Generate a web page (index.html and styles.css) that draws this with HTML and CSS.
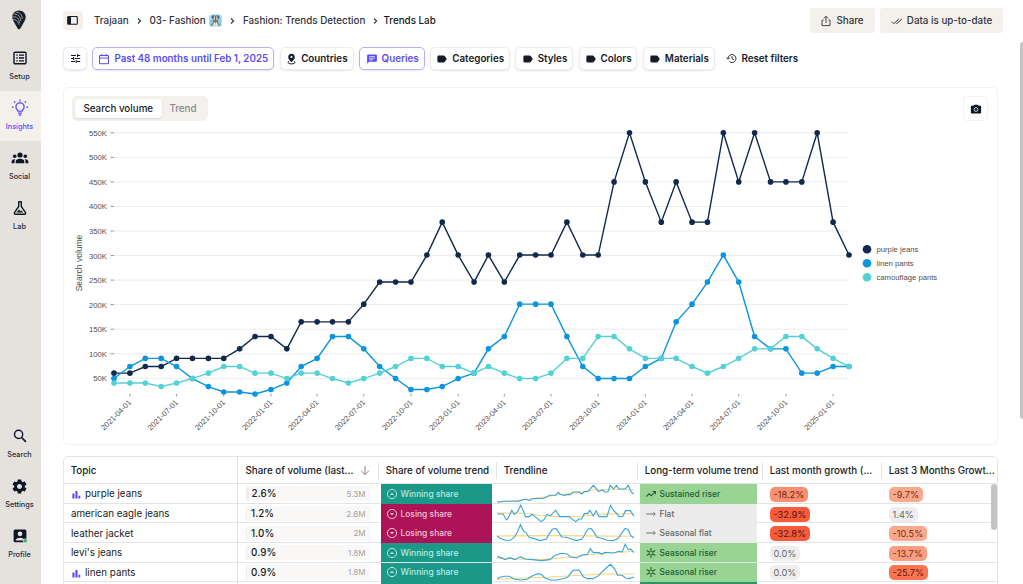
FILE: index.html
```html
<!DOCTYPE html>
<html lang="en">
<head>
<meta charset="UTF-8">
<meta name="viewport" content="width=device-width, initial-scale=1.0">
<title>Trends Lab</title>
<link rel="stylesheet" href="styles.css">
</head>
<body>
<!-- shared icons -->
<svg class="defs" width="0" height="0">
  <symbol id="tag" viewBox="0 0 12 12"><path d="M2.700 2.600h5c.5 0 .9.2 1.200.6L10.800 6 8.900 8.800c-.3.400-.7.600-1.200.600h-5C1.900 9.400 1.400 8.900 1.400 8.200V3.800c0-.7.500-1.200 1.300-1.200z" fill="currentColor"/></symbol>
  <symbol id="bars" viewBox="0 0 9 9"><path d="M.4 3.400h2.100v5.100H.4zM3.400.9h2.100v7.600H3.400zM6.400 5.800h1.900v2.700H6.400z" fill="currentColor"/></symbol>
  <symbol id="up" viewBox="0 0 12 12"><circle cx="6" cy="6" r="4.600" fill="none" stroke="currentColor" stroke-width="1"/><path d="M3.900 6.900L6 4.800l2.100 2.100z" fill="currentColor"/></symbol>
  <symbol id="down" viewBox="0 0 12 12"><circle cx="6" cy="6" r="4.600" fill="none" stroke="currentColor" stroke-width="1"/><path d="M3.900 5.100L6 7.200l2.100-2.100z" fill="currentColor"/></symbol>
  <symbol id="flat" viewBox="0 0 12 12"><path d="M1.300 6h9M8.300 4.200L10.200 6 8.300 7.800" fill="none" stroke="currentColor" stroke-width=".9"/></symbol>
  <symbol id="riser" viewBox="0 0 12 12"><path d="M1.300 8.600l2.800-2.800 2 2 4-4M7.600 3.500h2.800v2.800" fill="none" stroke="currentColor" stroke-width="1.100"/></symbol>
  <symbol id="season" viewBox="0 0 12 12"><circle cx="6" cy="6" r="2" fill="none" stroke="currentColor" stroke-width="1"/><path d="M6 1v2.500M6 8.500V11M1.700 3.500l2.200 1.300M8.100 7.200l2.200 1.300M1.700 8.500l2.200-1.300M8.100 4.800l2.200-1.300" stroke="currentColor" stroke-width="1.100"/></symbol>
</svg>

<div class="app">
  <nav class="sidebar">
    <div class="logo">
      <svg width="14" height="20" viewBox="0 0 14 20">
        <path d="M7 .5C3 .5.300 3.400.300 7.100c0 3.300 2 5.500 3.600 8.300.8 1.500 1.500 3 3.100 4.100 1.600-1.100 2.300-2.600 3.100-4.100 1.600-2.800 3.600-5 3.600-8.300C13.700 3.400 11 .5 7 .5z" fill="#1a202b"/>
        <path d="M.8 9.700c3.200-.4 5.300 1.300 6.100 5M.4 6.900c4.200-.6 7 1.600 7.200 6.300M1.500 4.200c4.400-.4 7.200 2.200 7.300 6.800M3.500 2c4.200.2 6.600 2.700 6.800 6.800" fill="none" stroke="#e5e2dd" stroke-width=".6"/>
      </svg>
    </div>
    <a class="nav-item">
      <svg width="16" height="16" viewBox="0 0 16 16"><rect x="2" y="2.200" width="12" height="11.600" rx="1" fill="none" stroke="currentColor" stroke-width="1.400"/><path d="M4.300 5.200h1.400M4.300 8h1.400M4.300 10.800h1.400M7 5.200h5M7 8h5M7 10.800h5" stroke="currentColor" stroke-width="1.300"/></svg>
      <span>Setup</span>
    </a>
    <a class="nav-item active">
      <svg width="18" height="18" viewBox="0 0 18 18"><path d="M6.900 12.200c0-1.200-2-2-2-4.300a4.100 4.100 0 0 1 8.200 0c0 2.300-2 3.100-2 4.300zM7 14.100h4M7.800 16h2.400M9 .6v1.900M3 2.300l1.200 1.200M15 2.300l-1.200 1.200M.8 8.200h1.900M15.300 8.200h1.900" fill="none" stroke="currentColor" stroke-width="1.300"/></svg>
      <span>Insights</span>
    </a>
    <a class="nav-item">
      <svg width="18" height="16" viewBox="0 0 18 16" fill="currentColor"><circle cx="9" cy="5" r="2.600"/><circle cx="3.700" cy="6.200" r="1.800"/><circle cx="14.300" cy="6.200" r="1.800"/><path d="M4.700 13.200v-1.600C4.700 9.800 6.700 8.800 9 8.800s4.300 1 4.300 2.800v1.600zM.6 13.200v-1.500c0-1.800 1.500-2.700 3.700-2.500-.6.700-.8 1.500-.8 2.400v1.600zM17.400 13.200v-1.500c0-1.800-1.500-2.700-3.700-2.500.6.700.8 1.500.8 2.400v1.600z"/></svg>
      <span>Social</span>
    </a>
    <a class="nav-item">
      <svg width="16" height="16" viewBox="0 0 16 16"><path d="M6.300 1.700h3.400M6.700 1.700v4.800L2.500 12.700c-.4.700 0 1.500.8 1.500h9.400c.8 0 1.200-.8.8-1.500L9.300 6.500V1.700" fill="none" stroke="currentColor" stroke-width="1.400"/><path d="M4.500 12.600l2.600-3 1.400 1.700.8-.7 2 2z" fill="currentColor"/></svg>
      <span>Lab</span>
    </a>
    <div class="spacer"></div>
    <a class="nav-item">
      <svg width="16" height="16" viewBox="0 0 16 16"><circle cx="6.600" cy="6.400" r="4.100" fill="none" stroke="currentColor" stroke-width="1.400"/><path d="M9.600 9.500l4.300 4.400" stroke="currentColor" stroke-width="1.700"/></svg>
      <span>Search</span>
    </a>
    <a class="nav-item">
      <svg width="17" height="17" viewBox="0 0 24 24"><path fill="currentColor" d="M19.430 12.980c.04-.32.070-.64.070-.98s-.03-.66-.07-.98l2.110-1.650c.19-.15.240-.42.120-.64l-2-3.460c-.12-.22-.39-.3-.61-.22l-2.490 1c-.52-.4-1.080-.73-1.690-.98l-.38-2.650C14.460 2.180 14.250 2 14 2h-4c-.25 0-.46.180-.49.420l-.38 2.650c-.61.250-1.170.59-1.690.98l-2.490-1c-.23-.09-.49 0-.61.220l-2 3.460c-.13.220-.07.490.120.640l2.110 1.650c-.04.320-.07.650-.07.980s.03.660.07.980l-2.110 1.650c-.19.150-.24.420-.12.640l2 3.460c.12.220.39.300.61.220l2.490-1c.52.400 1.080.730 1.690.980l.38 2.650c.03.240.24.420.49.420h4c.25 0 .46-.18.490-.42l.38-2.650c.61-.25 1.170-.59 1.690-.98l2.490 1c.23.090.49 0 .61-.22l2-3.460c.12-.22.070-.49-.12-.64l-2.110-1.650zM12 15.500c-1.930 0-3.500-1.570-3.500-3.500s1.570-3.500 3.500-3.500 3.500 1.570 3.500 3.500-1.570 3.500-3.500 3.500z"/></svg>
      <span>Settings</span>
    </a>
    <a class="nav-item profile">
      <svg width="16" height="16" viewBox="0 0 16 16"><rect x="1.600" y="1.500" width="12.800" height="12.800" rx="1.500" fill="#0e1525"/><circle cx="8" cy="5.800" r="2.400" fill="#e5e2dd"/><path d="M3.500 12.500c.6-2 2.600-2.700 4.500-2.700s3.900.7 4.500 2.700z" fill="#e5e2dd"/><circle cx="13.200" cy="12.800" r="2.400" fill="#e5e2dd"/><circle cx="13.200" cy="12.800" r="1.800" fill="#2fb573"/></svg>
      <span>Profile</span>
    </a>
  </nav>

  <main class="main">
    <header class="topbar">
      <button class="panel-btn"><svg width="11" height="11" viewBox="0 0 11 11"><rect x=".7" y="1.500" width="9.600" height="7.800" rx=".8" fill="none" stroke="#161b26" stroke-width="1.100"/><path d="M1 2h3v7H1z" fill="#161b26"/></svg></button>
      <div class="crumbs">
        <span class="c1">Trajaan</span>
        <svg class="chev" viewBox="0 0 5 8"><path d="M1 1.500L3.600 4 1 6.500"/></svg>
        <span class="c2">03- Fashion</span>
        <svg class="emoji" viewBox="0 0 13 13"><rect x=".3" y=".5" width="12.400" height="12" rx="2" fill="#87cfe3"/><path d="M1 1h3v4H1zM9 1h3v3H9z" fill="#b9e3ed"/><path d="M4 1l2.500 1L9 1l2 2-1.500 2-.9-.5.2 3.500L11 12H2l2.200-4 .2-3.500-.9.500L2 3z" fill="#3a6c91"/><path d="M4.900 1.500L6.500 4l1.600-2.500.4 4-2 2-2-2zM5 8h3l1.800 4H3.200z" fill="#eadbc5"/><path d="M5.900 2.500h1.200l.4 5-1 2-1-2z" fill="#b7504c"/></svg>
        <svg class="chev" viewBox="0 0 5 8"><path d="M1 1.500L3.600 4 1 6.500"/></svg>
        <span class="c3">Fashion: Trends Detection</span>
        <svg class="chev last" viewBox="0 0 5 8"><path d="M1 1.500L3.600 4 1 6.500"/></svg>
        <span class="current">Trends Lab</span>
      </div>
      <div class="actions">
        <button class="btn share"><svg width="12" height="12" viewBox="0 0 12 12"><path d="M6 8V1.400M3.800 3.400L6 1.200l2.200 2.200M3.500 5.200H2v5.400h8V5.200H8.500" fill="none" stroke="currentColor" stroke-width=".9"/></svg>Share</button>
        <button class="btn fresh"><svg width="12" height="12" viewBox="0 0 12 12"><path d="M1 6.600L2.900 8.700l4.900-4.900M5.200 8.200l.6.500 5.200-4.900" fill="none" stroke="currentColor" stroke-width="1"/></svg>Data is up-to-date</button>
      </div>
    </header>

    <div class="filters">
      <button class="chip tune"><svg width="11" height="11" viewBox="0 0 11 11"><path d="M1 2.500h5M8 2.500h2.200M7.500 1v3M1 5.500h2.200M5 5.500h5.200M3.700 4v3M1 8.500h4M7 8.500h3.200M6.200 7v3" fill="none" stroke="currentColor" stroke-width="1.100"/></svg></button>
      <button class="chip on date"><svg width="12" height="12" viewBox="0 0 12 12"><path d="M1.500 2.500h9v8.200h-9zM1.500 5.100h9M3.800.8v2.500M8.200.8v2.500" fill="none" stroke="currentColor" stroke-width="1"/></svg><span>Past 48 months until Feb 1, 2025</span></button>
      <button class="chip countries"><svg width="11" height="12" viewBox="0 0 11 12"><path d="M5.500.7c-2 0-3.300 1.400-3.300 3.200 0 2 1.700 3.700 3.300 5.300 1.600-1.600 3.300-3.300 3.300-5.300C8.800 2.100 7.500.7 5.500.7z" fill="currentColor"/><circle cx="5.500" cy="3.900" r="1.100" fill="#fff"/><path d="M3 8.300c-2 .8-1 2.600 2.500 2.600S10 9.100 8 8.300" fill="none" stroke="currentColor" stroke-width="1"/></svg><span>Countries</span></button>
      <button class="chip on queries"><svg width="12" height="12" viewBox="0 0 12 12"><path d="M2 1.600h8c.5 0 .9.400.9.900v5.300c0 .5-.4.900-.9.900H3.100L1.100 10.600V2.500c0-.5.400-.9.900-.9z" fill="currentColor"/><path d="M3 3.600h6M3 5.200h6M3 6.800h4" stroke="#fff" stroke-width=".7"/></svg><span>Queries</span></button>
      <button class="chip categories"><svg width="12" height="12"><use href="#tag"/></svg><span>Categories</span></button>
      <button class="chip styles"><svg width="12" height="12"><use href="#tag"/></svg><span>Styles</span></button>
      <button class="chip colors"><svg width="12" height="12"><use href="#tag"/></svg><span>Colors</span></button>
      <button class="chip materials"><svg width="12" height="12"><use href="#tag"/></svg><span>Materials</span></button>
      <button class="reset"><svg width="11" height="11" viewBox="0 0 11 11"><path d="M2 5.500a4 4 0 1 1 1.300 3M.4 4.500L2 6.200l1.600-1.700M6 3v2.700l2 1.100" fill="none" stroke="currentColor" stroke-width=".9"/></svg><span>Reset filters</span></button>
    </div>

    <section class="card">
      <div class="card-head">
        <div class="toggle"><span class="selected">Search volume</span><span class="other">Trend</span></div>
        <button class="camera"><svg width="12" height="12" viewBox="0 0 12 12"><path d="M4.200 1.800h3.600l.8 1h1.500c.6 0 1 .4 1 1v5.700c0 .6-.4 1-1 1H1.900c-.6 0-1-.4-1-1V3.800c0-.6.400-1 1-1h1.500z" fill="#0e1525"/><circle cx="6" cy="6.500" r="1.900" fill="none" stroke="#fff" stroke-width=".8"/></svg></button>
      </div>
      <svg id="chart" width="933" height="318" viewBox="64 125 933 318"></svg>
    </section>

    <section class="table">
      <div class="row head">
        <div>Topic</div>
        <div class="sorted"><span>Share of volume (last...</span><svg width="10" height="11" viewBox="0 0 10 11"><path d="M5 1v8.500M1.200 5.800L5 9.600l3.800-3.800" fill="none" stroke="#777" stroke-width=".9"/></svg></div>
        <div>Share of volume trend</div>
        <div>Trendline</div>
        <div>Long-term volume trend</div>
        <div>Last month growth (...</div>
        <div>Last 3 Months Growt...</div>
      </div>
      <div class="row">
        <div class="topic"><svg><use href="#bars"/></svg>purple jeans</div>
        <div class="share-cell"><p class="volume first"><b>2.6%</b><i>5.3M</i></p></div>
        <div class="trend win"><svg><use href="#up"/></svg>Winning share</div>
        <div class="spark"><svg viewBox="0 0 412 58"><polyline class="avg" points="0,54 60,50 120,42 180,33 240,26 290,18 350,16 412,18"/><polyline points="0,54 9,54 18,52 62,52 71,50 79,46 88,46 97,50 106,44 140,43 150,38 157,34 176,34 184,25 190,31 202,34 211,32 220,32 228,24 246,24 254,30 263,23 272,23 281,14 289,4 298,14 305,23 316,18 324,24 333,24 340,4 350,15 359,4 366,15 385,15 394,4 403,24 411,30"/></svg></div>
        <div class="term rise"><svg><use href="#riser"/></svg>Sustained riser</div>
        <div class="growth"><em class="g18">-18.2%</em></div>
        <div class="growth"><em class="g10">-9.7%</em></div>
      </div>
      <div class="row">
        <div class="topic">american eagle jeans</div>
        <div class="share-cell"><p class="volume"><b>1.2%</b><i>2.6M</i></p></div>
        <div class="trend lose"><svg><use href="#down"/></svg>Losing share</div>
        <div class="spark"><svg viewBox="0 0 412 58"><polyline class="avg" points="0,27 80,28 130,34 180,38 250,37 310,31 412,29"/><polyline points="0,30 18,30 28,48 34,42 44,19 52,31 62,22 71,4 79,20 85,38 96,38 105,31 117,40 132,53 140,48 150,31 160,35 176,19 188,38 216,38 236,53 246,45 254,45 262,29 272,29 279,19 289,36 298,20 306,38 330,38 341,4 350,20 358,27 366,38 378,37 386,20 401,20 411,37"/></svg></div>
        <div class="term flat"><svg><use href="#flat"/></svg>Flat</div>
        <div class="growth"><em class="g33">-32.9%</em></div>
        <div class="growth"><em class="zero">1.4%</em></div>
      </div>
      <div class="row">
        <div class="topic">leather jacket</div>
        <div class="share-cell"><p class="volume"><b>1.0%</b><i>2M</i></p></div>
        <div class="trend lose"><svg><use href="#down"/></svg>Losing share</div>
        <div class="spark"><svg viewBox="0 0 412 58"><polyline class="avg" points="0,39 190,38 412,40"/><polyline points="0,39 9,46 24,52 40,52 52,42 61,27 70,5 79,24 86,28 96,43 112,47 130,53 148,48 157,32 166,19 176,16 184,26 194,42 208,43 224,48 238,53 254,49 263,36 272,19 282,16 292,29 300,43 315,46 330,52 350,53 364,46 374,31 385,16 394,20 402,38 411,45"/></svg></div>
        <div class="term flat"><svg><use href="#flat"/></svg>Seasonal flat</div>
        <div class="growth"><em class="g33">-32.8%</em></div>
        <div class="growth"><em class="g10">-10.5%</em></div>
      </div>
      <div class="row">
        <div class="topic">levi's jeans</div>
        <div class="share-cell"><p class="volume"><b>0.9%</b><i>1.8M</i></p></div>
        <div class="trend win"><svg><use href="#up"/></svg>Winning share</div>
        <div class="spark"><svg viewBox="0 0 412 58"><polyline class="avg" points="0,46 70,48 130,50 190,45 260,37 330,31 412,25"/><polyline points="0,41 12,44 24,50 38,44 54,50 70,41 84,48 106,50 132,53 158,50 176,36 194,31 211,33 220,42 240,45 255,36 272,34 280,17 289,29 306,29 315,34 324,28 350,30 366,25 376,27 385,4 394,20 401,18 411,29"/></svg></div>
        <div class="term rise"><svg><use href="#season"/></svg>Seasonal riser</div>
        <div class="growth"><em class="zero">0.0%</em></div>
        <div class="growth"><em class="g14">-13.7%</em></div>
      </div>
      <div class="row">
        <div class="topic"><svg><use href="#bars"/></svg>linen pants</div>
        <div class="share-cell"><p class="volume"><b>0.9%</b><i>1.8M</i></p></div>
        <div class="trend win"><svg><use href="#up"/></svg>Winning share</div>
        <div class="spark"><svg viewBox="0 0 412 58"><polyline class="avg" points="0,49 60,46 150,43 250,37 320,33 412,33"/><polyline points="0,48 9,43 20,40 36,40 52,48 70,51 90,49 105,39 122,32 132,34 144,45 160,51 180,51 202,46 212,43 228,22 246,21 260,42 272,47 288,47 305,38 316,26 331,12 341,4 354,19 362,37 376,37 386,45 398,47 411,42"/></svg></div>
        <div class="term rise"><svg><use href="#season"/></svg>Seasonal riser</div>
        <div class="growth"><em class="zero">0.0%</em></div>
        <div class="growth"><em class="g26">-25.7%</em></div>
      </div>
      <div class="row">
        <div class="topic"></div>
        <div></div>
        <div class="trend win"></div>
        <div></div>
        <div class="term strong"></div>
        <div></div>
        <div></div>
      </div>
      <div class="table-scroll"></div>
    </section>
  </main>
  <div class="page-scroll"></div>
</div>
<script src="chart.js"></script>
</body>
</html>
```
FILE: styles.css
```css
* {
  box-sizing: border-box;
}

body {
  margin: 0;
  font-family: Inter, "Liberation Sans", sans-serif;
  font-size: 9.8px;
  color: #161b26;
  background-color: #fff;
  overflow: hidden;
}

.defs {
  position: absolute;
}

button {
  font: inherit;
  color: inherit;
  border: none;
  padding: 0;
  display: flex;
  align-items: center;
  justify-content: center;
  white-space: nowrap;
}

svg {
  flex-shrink: 0;
}

.app {
  display: flex;
  height: 584px;
  position: relative;
}

/* Sidebar */
.sidebar {
  width: 40.5px;
  background-color: #e5e2dd;
  display: flex;
  flex-direction: column;
  padding-bottom: 15px;
}

.logo {
  height: 41px;
  padding: 10px 0 0 12px;
}

.nav-item {
  height: 50px;
  display: flex;
  flex-direction: column;
  align-items: center;
  justify-content: space-between;
  padding: 9px 1.5px 9px 0;
  font-size: 7.3px;
  line-height: 11px;
  font-weight: 500;
  color: #252b38;
}

.nav-item svg {
  color: #0e1525;
}

.nav-item.active {
  background-color: #f4f1ed;
  color: #5b4df5;
  padding-top: 8px;
}

.nav-item.active svg {
  color: #5b4df5;
}

.spacer {
  flex: 1;
}

/* Main */
.main {
  flex: 1;
  min-width: 0;
  padding: 8px 20px 0 22.5px;
}

.topbar {
  height: 25px;
  display: flex;
  align-items: center;
}

.panel-btn {
  width: 19.5px;
  height: 19px;
  border-radius: 3px;
  background-color: #f4f0eb;
}

.crumbs {
  display: flex;
  align-items: center;
  margin-left: 11.5px;
  font-weight: 500;
  color: #30343c;
  white-space: nowrap;
}

.c1 {
  width: 34px;
}

.c2 {
  width: 56px;
}

.c3 {
  width: 122px;
}

.current {
  color: #12161f;
}

.chev {
  width: 5px;
  height: 8px;
  margin: 1px 8px 0 8.5px;
  fill: none;
  stroke: #30343c;
  stroke-width: 1.1;
}

.chev.last {
  margin-right: 5.5px;
  margin-left: 8px;
}

.emoji {
  width: 13px;
  height: 13px;
  margin-left: 3px;
  margin-top: -1px;
}

.actions {
  display: flex;
  gap: 5.5px;
  margin-left: auto;
}

.btn {
  height: 25px;
  gap: 4px;
  border-radius: 3px;
  background-color: #f4f0eb;
  font-weight: 500;
  color: #30343c;
}

.share {
  width: 65px;
}

.fresh {
  width: 123px;
}

/* Filters */
.filters {
  display: flex;
  gap: 5.3px;
  margin-top: 14px;
  font-weight: 600;
}

.chip {
  height: 23px;
  gap: 4px;
  border: 1px solid #ececec;
  border-radius: 5px;
  background-color: #fff;
  box-shadow: 0 1px 2px rgba(0, 0, 0, 0.1);
}

.chip.on {
  color: #5b4df5;
  border-color: #b8b0fb;
}

.tune { width: 24px; }
.date { width: 182px; }
.countries { width: 74.5px; }
.queries { width: 65.5px; }
.categories { width: 80px; }
.styles { width: 58px; }
.colors { width: 58.5px; }
.materials { width: 72.5px; }

.reset {
  background: none;
  gap: 4px;
  margin-left: 6px;
}

/* Chart card */
.card {
  width: 935px;
  height: 358px;
  margin-top: 17px;
  border: 1px solid #f2f2f2;
  border-radius: 5px;
}

.card-head {
  height: 37px;
  display: flex;
  justify-content: space-between;
  align-items: flex-start;
  padding: 8px 8.7px 0 8px;
}

.toggle {
  display: flex;
  width: 135.5px;
  height: 25px;
  padding: 3px;
  border-radius: 5px;
  background-color: #f4f0eb;
  line-height: 19px;
  text-align: center;
  font-weight: 500;
}

.selected {
  width: 86.5px;
  border-radius: 4px;
  background-color: #fff;
  box-shadow: 0 1px 2px rgba(0, 0, 0, 0.1);
}

.other {
  flex: 1;
  color: #858a93;
}

.camera {
  width: 25px;
  height: 25px;
  border: 1px solid #f6f1ee;
  border-radius: 4px;
  background-color: #fff;
}

#chart {
  display: block;
  font-family: "Liberation Sans", Arial, sans-serif;
  font-size: 7.7px;
  fill: #505050;
}

#chart .grid {
  stroke: #ececec;
}

#chart .tick {
  stroke: #999;
}

#chart polyline {
  fill: none;
  stroke-width: 1.4;
}

/* Table */
.table {
  width: 935px;
  height: 140px;
  margin-top: 11px;
  border: 1px solid #e4e4e4;
  border-radius: 5px 5px 0 0;
  overflow: hidden;
  position: relative;
}

.row {
  display: grid;
  grid-template-columns: 174px 141px 118px 141px 125px 119px 1fr;
  height: 19.6px;
  border-bottom: 1px solid #e4e4e4;
}

.row > div {
  display: flex;
  align-items: center;
  white-space: nowrap;
  min-width: 0;
}

.row > div:first-child {
  border-right: 1px solid #e4e4e4;
}

.head {
  height: 27.3px;
  font-weight: 500;
}

.head > div {
  padding-left: 6.7px;
  position: relative;
}

.head > div:nth-child(n+2):not(:last-child)::after {
  content: "";
  position: absolute;
  right: 0;
  top: 5px;
  width: 1px;
  height: 17px;
  background-color: #e4e4e4;
}

.row > .sorted {
  justify-content: space-between;
  padding-left: 7.5px;
  padding-right: 9px;
}

.topic {
  padding-left: 7px;
}

.topic svg {
  width: 9px;
  height: 9px;
  margin: 2px 4px 0 1px;
  color: #5b4df5;
}

.row > .share-cell {
  padding: 0 8px 0 8px;
}

.volume {
  flex: 1;
  display: flex;
  align-items: center;
  justify-content: space-between;
  height: 15px;
  margin: 0;
  padding: 0 5.5px 0 4px;
  border-left: 1.5px solid #ededeb;
  border-radius: 3px;
  background-color: #faf8f6;
}

.volume.first {
  border-left-width: 3px;
  padding-left: 2.5px;
}

.volume b {
  font-weight: 500;
  letter-spacing: 0.1px;
}

.volume i {
  font-style: normal;
  font-size: 8px;
  color: #a0a0a0;
}

.trend {
  gap: 2.5px;
  margin: 0 5px 0 2px;
  padding-left: 5px;
  font-size: 8.45px;
  font-weight: 500;
}

.trend svg,
.term svg {
  width: 12px;
  height: 12px;
}

.win {
  background-color: #1b9888;
  color: #b5ece0;
}

.lose {
  background-color: #ad1457;
  color: #f5c7da;
}

.spark svg {
  width: 137.3px;
  height: 19.3px;
  fill: none;
  stroke: #35a5dd;
  stroke-width: 3.3;
  overflow: visible;
}

.spark .avg {
  stroke: #ffd27d;
}

.term {
  gap: 2.5px;
  margin: 0 6px 0 2px;
  padding-left: 5px;
  font-size: 8.45px;
  font-weight: 500;
}

.rise {
  background-color: #98d594;
  color: #235c31;
}

.flat {
  background-color: #ececec;
  color: #666;
}

.strong {
  background-color: #2c9463;
}

.row > .growth {
  padding: 1px 0 0 6.5px;
}

.growth em {
  font-style: normal;
  font-size: 9.2px;
  line-height: 15px;
  padding: 0 4px;
  border-radius: 5px;
}

.zero { background-color: #eee; color: #666; }
.g10 { background-color: #fba78a; color: #752b18; }
.g14 { background-color: #fb9d80; color: #752b18; }
.g18 { background-color: #fa9070; color: #6b2413; }
.g26 { background-color: #fa7452; color: #5a1a0e; }
.g33 { background-color: #f65b3c; color: #4f140b; }

.table-scroll {
  position: absolute;
  top: 27px;
  right: 0;
  width: 6px;
  height: 46px;
  border-radius: 3px;
  background-color: #c4c4c4;
}

.page-scroll {
  position: absolute;
  top: 42px;
  right: 0;
  width: 3px;
  height: 377px;
  border-radius: 3px 0 0 3px;
  background-color: #c4c4c4;
}
```
FILE: chart.js
```js
const NS = 'http://www.w3.org/2000/svg';
const chart = document.getElementById('chart');

// Monthly search volume in thousands, from 2021-03 to 2025-02
const series = [
  { name: 'purple jeans', color: '#10294d', data: [60.5,60.5,74,74,90.5,90.5,90.5,90.5,110,135,135,110,165,165,165,165,201,246,246,246,301,368,301,246,301,246,301,301,301,368,301,301,450,550,450,368,450,368,368,550,450,550,450,450,450,550,368,301] },
  { name: 'linen pants', color: '#0b95de', data: [49.5,74,90.5,90.5,74,49.5,33.1,22.2,22.2,18.1,27.1,40.5,74,90.5,135,135,110,74,49.5,27.1,27.1,33.1,49.5,60.5,110,135,201,201,201,135,74,49.5,49.5,49.5,74,90.5,165,201,246,301,246,135,110,110,60.5,60.5,74,74] },
  { name: 'camouflage pants', color: '#54d1d5', data: [40.5,40.5,40.5,33.1,40.5,49.5,60.5,74,74,60.5,60.5,49.5,60.5,60.5,49.5,40.5,49.5,60.5,74,90.5,90.5,74,74,60.5,74,60.5,49.5,49.5,60.5,90.5,90.5,135,135,110,90.5,90.5,90.5,74,60.5,74,90.5,110,110,135,135,110,90.5,74] }
];

const start = Date.UTC(2021, 2, 1);
const end = Date.UTC(2025, 1, 1);

function x(month) {
  return 114 + 735 * (Date.UTC(2021, 2 + month, 1) - start) / (end - start);
}

function y(value) {
  return 132.8 + (550 - value) * 0.491;
}

function add(tag, attrs, text) {
  const el = document.createElementNS(NS, tag);
  for (const key in attrs) el.setAttribute(key, attrs[key]);
  if (text) el.textContent = text;
  chart.appendChild(el);
}

// Y axis
for (let v = 50; v <= 550; v += 50) {
  add('line', { class: 'grid', x1: 114, x2: 849, y1: y(v), y2: y(v) });
  add('line', { class: 'tick', x1: 110.5, x2: 114, y1: y(v), y2: y(v) });
  add('text', { x: 107, y: y(v) + 3, 'text-anchor': 'end' }, v + 'K');
}
add('text', { transform: 'translate(82 263) rotate(-90)', 'text-anchor': 'middle', 'font-size': 8.8, style: 'font-size: 8.5px' }, 'Search volume');

// X axis, one label per quarter
for (let m = 1; m < 48; m += 3) {
  const label = new Date(Date.UTC(2021, 2 + m, 1)).toISOString().slice(0, 10);
  add('line', { class: 'tick', x1: x(m), x2: x(m), y1: 394, y2: 396.5 });
  add('text', { transform: `translate(${x(m) + 2} 403) rotate(-45)`, 'text-anchor': 'end' }, label);
}

// Lines, points and legend
series.forEach((s, i) => {
  const points = s.data.map((v, m) => x(m) + ',' + y(v)).join(' ');
  add('polyline', { points: points, stroke: s.color });
  s.data.forEach((v, m) => add('circle', { cx: x(m), cy: y(v), r: 2.8, fill: s.color }));
  add('circle', { cx: 867, cy: 249.3 + i * 14, r: 4.3, fill: s.color });
  add('text', { x: 876.5, y: 252 + i * 14 }, s.name);
});
```
